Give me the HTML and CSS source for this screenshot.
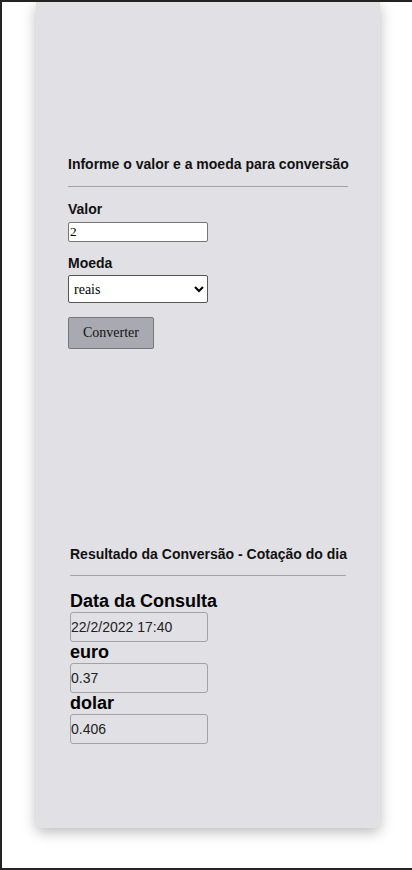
FILE: index.html
```html
<!DOCTYPE html>
<html lang="pt-BR">
<head>
<meta charset="utf-8">
<title>Conversor de moedas</title>
<link rel="stylesheet" href="styles.css">
</head>
<body>
<div class="frame">
  <main class="card">
    <section class="form-section">
      <h2 class="section-title">Informe o valor e a moeda para conversão</h2>
      <hr class="rule">
      <label class="field-label" for="valor">Valor</label>
      <input class="text-input" id="valor" type="text" value="2">
      <label class="field-label moeda-label" for="moeda">Moeda</label>
      <select class="select-input" id="moeda">
        <option>reais</option>
        <option>euro</option>
        <option>dolar</option>
      </select>
      <button class="convert-btn" type="button">Converter</button>
    </section>
    <section class="result-section">
      <h2 class="section-title">Resultado da Conversão - Cotação do dia</h2>
      <hr class="rule rule-result">
      <div class="result-label first">Data da Consulta</div>
      <div class="result-box">22/2/2022 17:40</div>
      <div class="result-label">euro</div>
      <div class="result-box">0.37</div>
      <div class="result-label">dolar</div>
      <div class="result-box">0.406</div>
    </section>
  </main>
</div>
</body>
</html>
```

FILE: styles.css
```css
html, body {
  margin: 0;
  padding: 0;
  background: #ffffff;
}

.frame {
  box-sizing: border-box;
  width: 412px;
  height: 870px;
  border-top: 2px solid #232323;
  border-left: 2px solid #232323;
  border-bottom: 2px solid #232323;
  background: #ffffff;
  overflow: hidden;
}

.card {
  box-sizing: border-box;
  margin-left: 34px;
  width: 344px;
  height: 826px;
  background: #e1e0e5;
  border-radius: 0 0 5px 5px;
  box-shadow: 0 4px 14px rgba(0, 0, 0, 0.28);
  display: flex;
  flex-direction: column;
  font-family: "Liberation Sans", Arial, sans-serif;
  color: #111;
}

.form-section {
  display: flex;
  flex-direction: column;
  align-items: flex-start;
  margin: 153px 32px 0 32px;
}

.section-title {
  margin: 0;
  padding-top: 2px;
  font-size: 14px;
  line-height: 15px;
  font-weight: bold;
  white-space: nowrap;
}

.rule {
  align-self: stretch;
  margin: 14px 0 0 0;
  border: 0;
  height: 1px;
  background: #a3a3a6;
}

.field-label {
  margin-top: 14px;
  font-size: 14px;
  line-height: 16px;
  font-weight: bold;
}

.moeda-label {
  margin-top: 13px;
}

.text-input {
  box-sizing: border-box;
  margin: 5px 0 0 0;
  width: 140px;
  height: 20px;
  padding: 1px 1px;
  border: 1px solid #767676;
  border-radius: 2px;
  background: #fff;
  font-family: "Liberation Serif", "Times New Roman", serif;
  font-size: 13.33px;
  color: #000;
}

.select-input {
  box-sizing: border-box;
  margin: 4px 0 0 0;
  width: 140px;
  height: 28px;
  padding: 0 1px;
  border: 1px solid #555;
  border-radius: 2px;
  background: #fff;
  font-family: "Liberation Serif", "Times New Roman", serif;
  font-size: 14px;
  color: #000;
}

.convert-btn {
  box-sizing: border-box;
  margin-top: 14px;
  width: 86px;
  height: 32px;
  padding: 0;
  border: 1px solid #77777d;
  border-radius: 2px;
  background: #a9a9b1;
  font-family: "Liberation Serif", "Times New Roman", serif;
  font-size: 14px;
  color: #111;
}

.result-section {
  display: flex;
  flex-direction: column;
  align-items: flex-start;
  margin: 196px 34px 0 34px;
}

.rule-result {
  margin-top: 13px;
}

.result-label {
  font-size: 18px;
  line-height: 21px;
  font-weight: bold;
  color: #000;
}

.result-label.first {
  margin-top: 15px;
}

.result-box {
  box-sizing: border-box;
  width: 138px;
  height: 30px;
  padding: 0;
  border: 1px solid #a3a3a6;
  border-radius: 3px;
  font-size: 14px;
  line-height: 28px;
  color: #222;
}
```
